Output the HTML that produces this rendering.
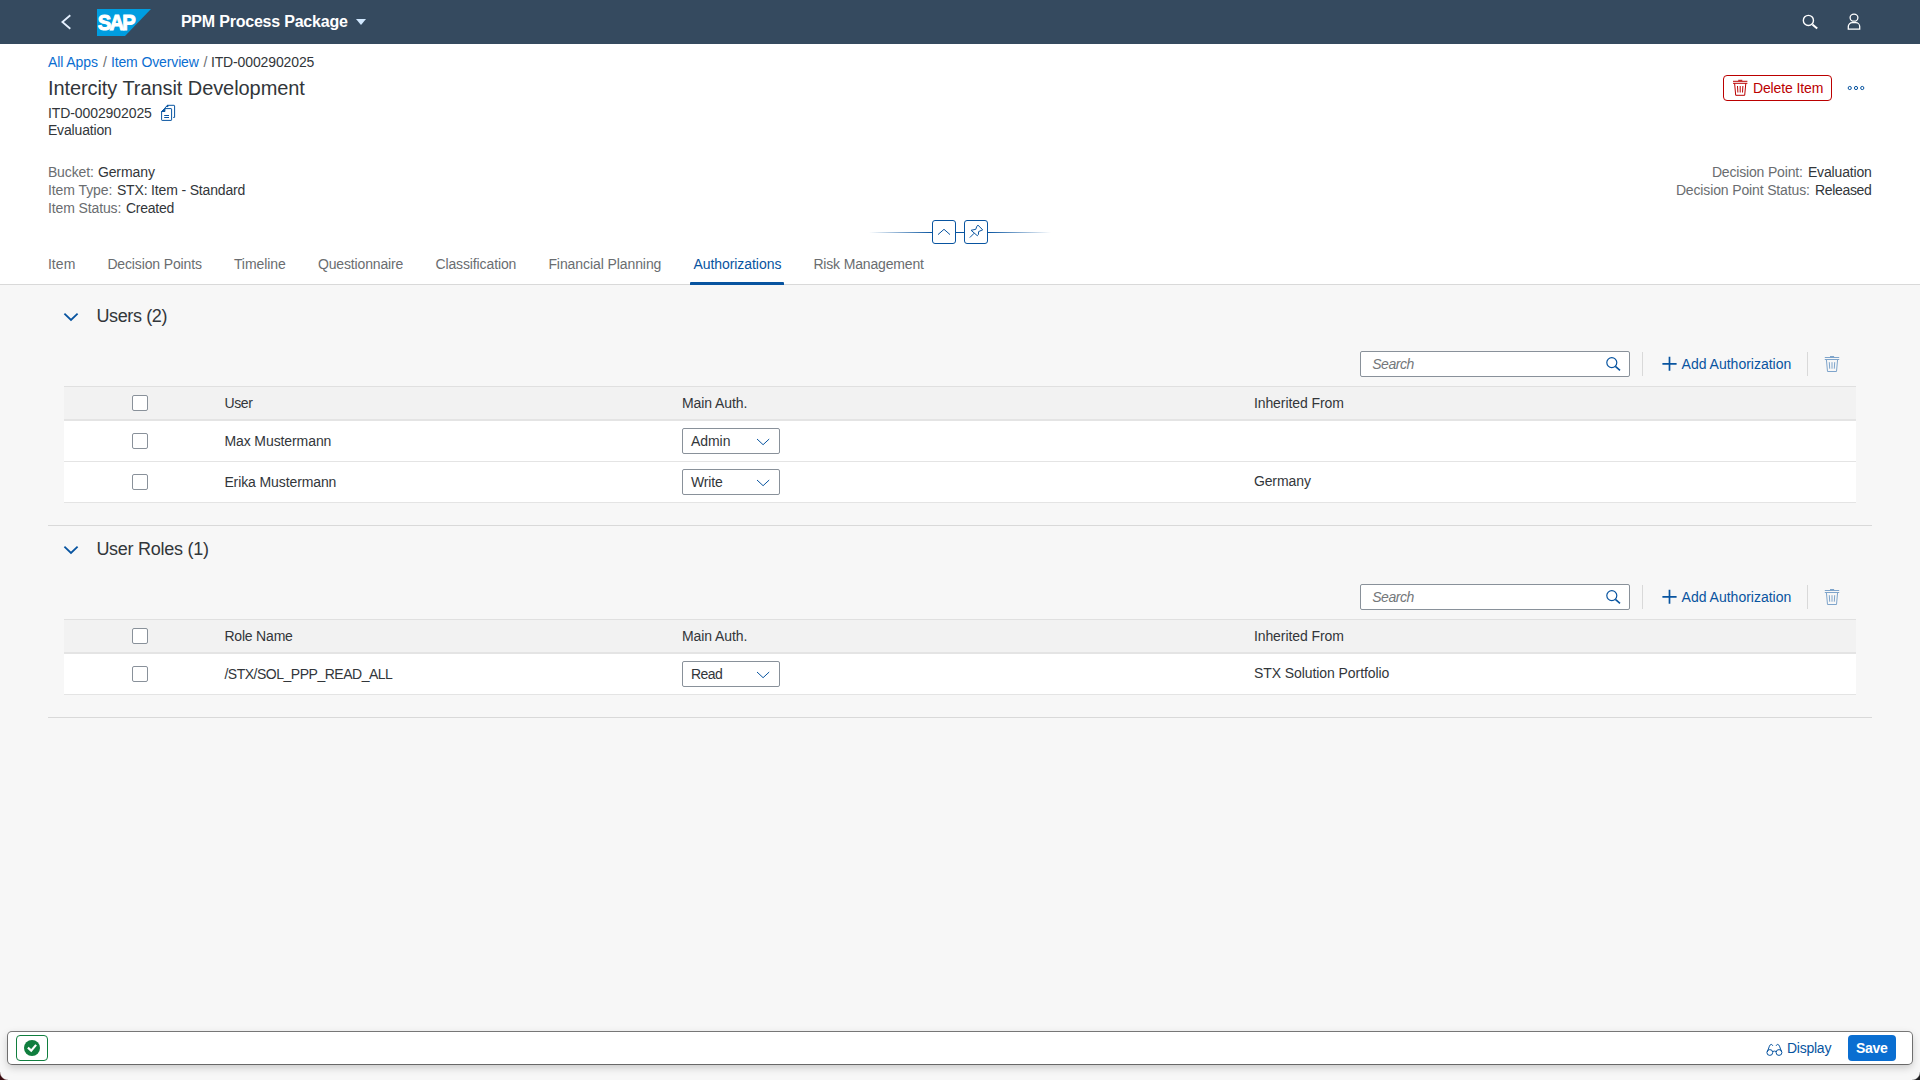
<!DOCTYPE html>
<html lang="en"><head><meta charset="utf-8"><title>Intercity Transit Development</title>
<style>
*{box-sizing:border-box;margin:0;padding:0}
html,body{width:1920px;height:1080px;overflow:hidden}
body{position:relative;background:#f7f7f7;font-family:"Liberation Sans",sans-serif;font-size:14px;color:#32363a}
.a{position:absolute}
.t{position:absolute;white-space:pre;font-family:"Liberation Sans",sans-serif}
#shell{left:0;top:0;width:1920px;height:44px;background:#354a5f}
#hdr{left:0;top:44px;width:1920px;height:241px;background:#fff;border-bottom:1px solid #d9d9d9}
.cb{position:absolute;width:16px;height:16px;border:1px solid #89919a;border-radius:2px;background:#fff}
.sel{position:absolute;width:98px;height:26px;border:1px solid #89919a;border-radius:2px;background:#fff}
.inp{position:absolute;width:270px;height:26px;border:1px solid #89919a;border-radius:2px;background:#fff}
.vsep{position:absolute;width:1px;height:24px;background:#d9d9d9}
.thead{position:absolute;left:64px;width:1792px;height:35px;background:#f2f2f2;border-top:1px solid #e0e0e0;border-bottom:2px solid #e4e4e4}
.trow{position:absolute;left:64px;width:1792px;height:41px;background:#fff;border-bottom:1px solid #e4e4e4}
.hline{position:absolute;left:48px;width:1824px;height:1px;background:#d9d9d9}
svg{position:absolute;overflow:visible}

#footer{left:8px;top:1032px;width:1904px;height:32px;background:#fff;border-radius:4px;box-shadow:0 0 0 1px rgba(0,0,0,.5),0 3px 8px rgba(0,0,0,.22)}

</style></head>
<body>
<div class="a" id="shell"></div>
<div class="a" id="hdr"></div>
<!-- section lines -->
<div class="hline" style="top:525px"></div>
<div class="hline" style="top:717px"></div>
<!-- table 1 -->
<div class="thead" style="top:386px"></div>
<div class="trow" style="top:421px"></div>
<div class="trow" style="top:462px"></div>
<!-- table 2 -->
<div class="thead" style="top:619px"></div>
<div class="trow" style="top:654px"></div>
<!-- checkboxes -->
<div class="cb" style="left:132px;top:395px"></div>
<div class="cb" style="left:132px;top:433px"></div>
<div class="cb" style="left:132px;top:474px"></div>
<div class="cb" style="left:132px;top:628px"></div>
<div class="cb" style="left:132px;top:666px"></div>
<!-- selects -->
<div class="sel" style="left:682px;top:428px"></div>
<div class="sel" style="left:682px;top:469px"></div>
<div class="sel" style="left:682px;top:661px"></div>
<!-- search inputs -->
<div class="inp" style="left:1360px;top:351px"></div>
<div class="inp" style="left:1360px;top:584px"></div>
<div class="vsep" style="left:1642px;top:352px"></div>
<div class="vsep" style="left:1807px;top:352px"></div>
<div class="vsep" style="left:1642px;top:585px"></div>
<div class="vsep" style="left:1807px;top:585px"></div>
<!-- footer -->
<div class="a" id="footer"></div>
<div class="a" style="left:16px;top:1035px;width:32px;height:26px;border:1px solid #107e3e;border-radius:4px;background:#fff"></div>
<div class="a" style="left:1848px;top:1035px;width:48px;height:26px;border-radius:4px;background:#0a6ed1"></div>
<!-- delete button -->
<div class="a" style="left:1723px;top:75px;width:109px;height:26px;border:1px solid #bb0000;border-radius:4px;background:#fff"></div>
<!-- tab underline -->
<div class="a" style="left:690px;top:282px;width:94px;height:3px;background:#0854a0;border-radius:1px 1px 0 0"></div>
<!-- collapse / pin -->
<div class="a" style="left:869px;top:232px;width:63px;height:1px;background:linear-gradient(to right,rgba(8,84,160,0),#0854a0)"></div>
<div class="a" style="left:956px;top:232px;width:8px;height:1px;background:#0854a0"></div>
<div class="a" style="left:988px;top:232px;width:63px;height:1px;background:linear-gradient(to right,#0854a0,rgba(8,84,160,0))"></div>
<div class="a" style="left:932px;top:220px;width:24px;height:24px;border:1px solid #0854a0;border-radius:3px;background:#fff"></div>
<div class="a" style="left:964px;top:220px;width:24px;height:24px;border:1px solid #0854a0;border-radius:3px;background:#fff"></div>
<!-- window corners -->
<div class="a" style="left:0;top:1072px;width:8px;height:8px;background:radial-gradient(circle at 100% 0,rgba(58,12,16,0) 7.3px,#3a0c10 8.6px)"></div>
<div class="a" style="left:1912px;top:1072px;width:8px;height:8px;background:radial-gradient(circle at 0 0,rgba(30,30,32,0) 7.3px,#1e1e20 8.6px)"></div>

<!-- ICON LAYER -->
<svg class="a" style="left:0;top:0" width="1920" height="1080" viewBox="0 0 1920 1080" fill="none">
  <!-- back chevron -->
  <path d="M70.3 15.3 L62.4 22 L70.3 28.7" stroke="#e5f0ff" stroke-width="1.8"/>
  <!-- SAP logo -->
  <path d="M97 9 H151 L125 36 H97 Z" fill="#009de0"/>
  <text transform="translate(97.8 30.4) scale(.93 1)" style="letter-spacing:-2px" font-family="Liberation Sans, sans-serif" font-weight="700" font-size="21.8" fill="#fff" stroke="#fff" stroke-width="1">SAP</text>
  <!-- title dropdown -->
  <path d="M356 19 H366 L361 25 Z" fill="#d1e8ff"/>
  <!-- shell search -->
  <circle cx="1808.4" cy="20.4" r="5.05" stroke="#fff" stroke-width="1.4"/>
  <path d="M1812.4 24.4 L1817.2 28.6" stroke="#fff" stroke-width="2"/>
  <!-- shell user -->
  <ellipse cx="1854" cy="17.7" rx="3.9" ry="3.5" stroke="#fff" stroke-width="1.3"/>
  <path d="M1848.3 29.2 V26.6 A3.9 3.9 0 0 1 1852.2 22.7 H1855.8 A3.9 3.9 0 0 1 1859.7 26.6 V29.2 Z" stroke="#fff" stroke-width="1.3"/>
  <!-- copy icon -->
  <g stroke="#0854a0" stroke-width="1">
    <path d="M161.6 111.5 L164.9 108.6 H171.1 A.5 .5 0 0 1 171.6 109.1 V119.9 A.5 .5 0 0 1 171.1 120.4 H162.1 A.5 .5 0 0 1 161.6 119.9 Z"/>
    <path d="M161.6 111.5 L164.9 108.6 V111.5 Z" fill="#0854a0"/>
    <path d="M164.2 115.5 H169 M164.2 117.5 H169"/>
    <path d="M164.6 108.4 L167.4 105.3 H174.1 A.5 .5 0 0 1 174.6 105.8 V117.4 H173.2"/>
    <path d="M166.4 106.6 L167.6 105.3 H168 V106.6 Z" fill="#0854a0"/>
  </g>
  <!-- delete (red trash) -->
  <g id="trash" stroke="#bb0000" stroke-width="1" transform="translate(-91.8 -276.2)">
    <path d="M1824.8 357.5 H1839.2 M1830 356.5 H1834.1 M1824.8 359.5 H1839.2"/>
    <path d="M1826.4 359.5 L1827.5 371.5 H1836.5 L1837.6 359.5"/>
    <path d="M1829.3 362.2 L1829.7 368.7 M1832 362.2 V368.7 M1834.7 362.2 L1834.3 368.7"/>
  </g>
  <!-- overflow -->
  <g stroke="#0854a0" stroke-width="1">
    <circle cx="1849.75" cy="88" r="1.6"/><circle cx="1856" cy="88" r="1.6"/><circle cx="1862.25" cy="88" r="1.6"/>
  </g>
  <!-- collapse chevron -->
  <path d="M938 234.6 L944 229.3 L950 234.6" stroke="#0854a0" stroke-width="1"/>
  <!-- pin -->
  <path d="M978 225.2 L982.7 229.8 L978.6 231.6 L978.4 234.6 L977.3 235.7 L971.1 230.3 L975.8 229.3 L976.8 226.3 Z M974.2 233.2 L969.8 237.6" stroke="#0854a0" stroke-width="1"/>
  <!-- section chevrons -->
  <path d="M64.4 313.6 L71 320 L77.6 313.6" stroke="#0854a0" stroke-width="1.8"/>
  <path d="M64.4 546.6 L71 553 L77.6 546.6" stroke="#0854a0" stroke-width="1.8"/>
  <!-- toolbar 1 -->
  <g id="tb">
    <circle cx="1611.8" cy="362.6" r="5" stroke="#0854a0" stroke-width="1.2"/>
    <path d="M1615.4 366.3 L1620 370.3" stroke="#0854a0" stroke-width="1.6"/>
    <path d="M1662.4 363.8 H1676.6 M1669.5 356.8 V370.8" stroke="#0854a0" stroke-width="1.7"/>
    <g stroke="#0854a0" stroke-width="1" opacity=".5">
      <path d="M1824.8 357.5 H1839.2 M1830 356.5 H1834.1 M1824.8 359.5 H1839.2"/>
      <path d="M1826.4 359.5 L1827.5 371.5 H1836.5 L1837.6 359.5"/>
      <path d="M1829.3 362.2 L1829.7 368.7 M1832 362.2 V368.7 M1834.7 362.2 L1834.3 368.7"/>
    </g>
  </g>
  <!-- toolbar 2 -->
  <g transform="translate(0 233)">
    <circle cx="1611.8" cy="362.6" r="5" stroke="#0854a0" stroke-width="1.2"/>
    <path d="M1615.4 366.3 L1620 370.3" stroke="#0854a0" stroke-width="1.6"/>
    <path d="M1662.4 363.8 H1676.6 M1669.5 356.8 V370.8" stroke="#0854a0" stroke-width="1.7"/>
    <g stroke="#0854a0" stroke-width="1" opacity=".5">
      <path d="M1824.8 357.5 H1839.2 M1830 356.5 H1834.1 M1824.8 359.5 H1839.2"/>
      <path d="M1826.4 359.5 L1827.5 371.5 H1836.5 L1837.6 359.5"/>
      <path d="M1829.3 362.2 L1829.7 368.7 M1832 362.2 V368.7 M1834.7 362.2 L1834.3 368.7"/>
    </g>
  </g>
  <!-- select arrows -->
  <path d="M757 439 L763.1 444.7 L769.2 439" stroke="#0854a0" stroke-width="1"/>
  <path d="M757 480 L763.1 485.7 L769.2 480" stroke="#0854a0" stroke-width="1"/>
  <path d="M757 672 L763.1 677.7 L769.2 672" stroke="#0854a0" stroke-width="1"/>
  <!-- footer: green check -->
  <circle cx="32" cy="1048" r="8" fill="#107e3e"/>
  <path d="M27.9 1047.6 L31.2 1050.6 L36.1 1044.9" stroke="#fff" stroke-width="2.2"/>
  <!-- footer: glasses -->
  <g stroke="#0854a0" stroke-width="1">
    <circle cx="1769.8" cy="1052.5" r="2.9"/><circle cx="1779" cy="1052.5" r="2.9"/>
    <path d="M1772.4 1051.6 Q1774.45 1050.6 1776.5 1051.6"/>
    <path d="M1767.3 1052 L1769.4 1046.2 Q1770.2 1044.3 1771.3 1044.4 Q1772.2 1044.5 1772.8 1045.8"/>
    <path d="M1781.6 1052 L1779.5 1046.2 Q1778.7 1044.3 1777.6 1044.4 Q1776.7 1044.5 1776.1 1045.8"/>
  </g>
</svg>

<!-- text layer -->
<div class="t" style="left:180.9px;top:12.7px;font-size:16px;line-height:18px;color:#ffffff;font-weight:700;font-style:normal;letter-spacing:-0.209px">PPM Process Package</div>
<div class="t" style="left:47.9px;top:54.0px;font-size:14px;line-height:16px;color:#0a6ed1;font-weight:400;font-style:normal;letter-spacing:-0.085px">All Apps</div>
<div class="t" style="left:102.9px;top:54.0px;font-size:14px;line-height:16px;color:#6a6d70;font-weight:400;font-style:normal;letter-spacing:-0.391px">/</div>
<div class="t" style="left:110.9px;top:54.0px;font-size:14px;line-height:16px;color:#0a6ed1;font-weight:400;font-style:normal;letter-spacing:-0.122px">Item Overview</div>
<div class="t" style="left:203.4px;top:54.0px;font-size:14px;line-height:16px;color:#6a6d70;font-weight:400;font-style:normal;letter-spacing:-0.391px">/</div>
<div class="t" style="left:210.9px;top:54.0px;font-size:14px;line-height:16px;color:#32363a;font-weight:400;font-style:normal;letter-spacing:-0.121px">ITD-0002902025</div>
<div class="t" style="left:47.9px;top:76.5px;font-size:20px;line-height:22px;color:#32363a;font-weight:400;font-style:normal;letter-spacing:-0.071px">Intercity Transit Development</div>
<div class="t" style="left:47.9px;top:104.5px;font-size:14px;line-height:16px;color:#32363a;font-weight:400;font-style:normal;letter-spacing:-0.083px">ITD-0002902025</div>
<div class="t" style="left:47.9px;top:122.0px;font-size:14px;line-height:16px;color:#32363a;font-weight:400;font-style:normal;letter-spacing:-0.155px">Evaluation</div>
<div class="t" style="left:47.9px;top:164.0px;font-size:14px;line-height:16px;color:#6a6d70;font-weight:400;font-style:normal;letter-spacing:-0.117px">Bucket:</div>
<div class="t" style="left:97.9px;top:164.0px;font-size:14px;line-height:16px;color:#32363a;font-weight:400;font-style:normal;letter-spacing:-0.096px">Germany</div>
<div class="t" style="left:47.9px;top:182.0px;font-size:14px;line-height:16px;color:#6a6d70;font-weight:400;font-style:normal;letter-spacing:-0.068px">Item Type:</div>
<div class="t" style="left:116.9px;top:182.0px;font-size:14px;line-height:16px;color:#32363a;font-weight:400;font-style:normal;letter-spacing:-0.158px">STX: Item - Standard</div>
<div class="t" style="left:47.9px;top:200.0px;font-size:14px;line-height:16px;color:#6a6d70;font-weight:400;font-style:normal;letter-spacing:-0.109px">Item Status:</div>
<div class="t" style="left:125.9px;top:200.0px;font-size:14px;line-height:16px;color:#32363a;font-weight:400;font-style:normal;letter-spacing:-0.219px">Created</div>
<div class="t" style="left:1711.9px;top:164.0px;font-size:14px;line-height:16px;color:#6a6d70;font-weight:400;font-style:normal;letter-spacing:-0.171px">Decision Point:</div>
<div class="t" style="left:1807.9px;top:164.0px;font-size:14px;line-height:16px;color:#32363a;font-weight:400;font-style:normal;letter-spacing:-0.155px">Evaluation</div>
<div class="t" style="left:1675.9px;top:182.0px;font-size:14px;line-height:16px;color:#6a6d70;font-weight:400;font-style:normal;letter-spacing:-0.141px">Decision Point Status:</div>
<div class="t" style="left:1814.9px;top:182.0px;font-size:14px;line-height:16px;color:#32363a;font-weight:400;font-style:normal;letter-spacing:-0.308px">Released</div>
<div class="t" style="left:1752.9px;top:79.5px;font-size:14px;line-height:16px;color:#bb0000;font-weight:400;font-style:normal;letter-spacing:-0.109px">Delete Item</div>
<div class="t" style="left:47.9px;top:255.5px;font-size:14px;line-height:16px;color:#6a6d70;font-weight:400;font-style:normal;letter-spacing:0.089px">Item</div>
<div class="t" style="left:107.4px;top:255.5px;font-size:14px;line-height:16px;color:#6a6d70;font-weight:400;font-style:normal;letter-spacing:-0.143px">Decision Points</div>
<div class="t" style="left:233.9px;top:255.5px;font-size:14px;line-height:16px;color:#6a6d70;font-weight:400;font-style:normal;letter-spacing:-0.056px">Timeline</div>
<div class="t" style="left:317.9px;top:255.5px;font-size:14px;line-height:16px;color:#6a6d70;font-weight:400;font-style:normal;letter-spacing:-0.139px">Questionnaire</div>
<div class="t" style="left:435.4px;top:255.5px;font-size:14px;line-height:16px;color:#6a6d70;font-weight:400;font-style:normal;letter-spacing:-0.114px">Classification</div>
<div class="t" style="left:548.4px;top:255.5px;font-size:14px;line-height:16px;color:#6a6d70;font-weight:400;font-style:normal;letter-spacing:-0.083px">Financial Planning</div>
<div class="t" style="left:693.4px;top:255.5px;font-size:14px;line-height:16px;color:#0854a0;font-weight:400;font-style:normal;letter-spacing:-0.055px">Authorizations</div>
<div class="t" style="left:813.4px;top:255.5px;font-size:14px;line-height:16px;color:#6a6d70;font-weight:400;font-style:normal;letter-spacing:-0.166px">Risk Management</div>
<div class="t" style="left:96.4px;top:305.5px;font-size:18px;line-height:20px;color:#32363a;font-weight:400;font-style:normal;letter-spacing:-0.377px">Users (2)</div>
<div class="t" style="left:1372.2px;top:355.5px;font-size:14px;line-height:16px;color:#74777a;font-weight:400;font-style:italic;letter-spacing:-0.432px">Search</div>
<div class="t" style="left:1681.6px;top:355.5px;font-size:14px;line-height:16px;color:#0854a0;font-weight:400;font-style:normal;letter-spacing:-0.003px">Add Authorization</div>
<div class="t" style="left:224.4px;top:395.0px;font-size:14px;line-height:16px;color:#32363a;font-weight:400;font-style:normal;letter-spacing:-0.354px">User</div>
<div class="t" style="left:681.9px;top:395.0px;font-size:14px;line-height:16px;color:#32363a;font-weight:400;font-style:normal;letter-spacing:-0.073px">Main Auth.</div>
<div class="t" style="left:1253.9px;top:395.0px;font-size:14px;line-height:16px;color:#32363a;font-weight:400;font-style:normal;letter-spacing:-0.081px">Inherited From</div>
<div class="t" style="left:224.4px;top:432.5px;font-size:14px;line-height:16px;color:#32363a;font-weight:400;font-style:normal;letter-spacing:-0.089px">Max Mustermann</div>
<div class="t" style="left:690.9px;top:432.5px;font-size:14px;line-height:16px;color:#32363a;font-weight:400;font-style:normal;letter-spacing:-0.022px">Admin</div>
<div class="t" style="left:224.4px;top:473.5px;font-size:14px;line-height:16px;color:#32363a;font-weight:400;font-style:normal;letter-spacing:-0.106px">Erika Mustermann</div>
<div class="t" style="left:690.9px;top:473.5px;font-size:14px;line-height:16px;color:#32363a;font-weight:400;font-style:normal;letter-spacing:-0.105px">Write</div>
<div class="t" style="left:1253.9px;top:473.0px;font-size:14px;line-height:16px;color:#32363a;font-weight:400;font-style:normal;letter-spacing:-0.096px">Germany</div>
<div class="t" style="left:96.4px;top:538.5px;font-size:18px;line-height:20px;color:#32363a;font-weight:400;font-style:normal;letter-spacing:-0.272px">User Roles (1)</div>
<div class="t" style="left:1372.2px;top:588.5px;font-size:14px;line-height:16px;color:#74777a;font-weight:400;font-style:italic;letter-spacing:-0.432px">Search</div>
<div class="t" style="left:1681.6px;top:588.5px;font-size:14px;line-height:16px;color:#0854a0;font-weight:400;font-style:normal;letter-spacing:-0.003px">Add Authorization</div>
<div class="t" style="left:224.4px;top:628.0px;font-size:14px;line-height:16px;color:#32363a;font-weight:400;font-style:normal;letter-spacing:-0.191px">Role Name</div>
<div class="t" style="left:681.9px;top:628.0px;font-size:14px;line-height:16px;color:#32363a;font-weight:400;font-style:normal;letter-spacing:-0.073px">Main Auth.</div>
<div class="t" style="left:1253.9px;top:628.0px;font-size:14px;line-height:16px;color:#32363a;font-weight:400;font-style:normal;letter-spacing:-0.081px">Inherited From</div>
<div class="t" style="left:224.4px;top:665.5px;font-size:14px;line-height:16px;color:#32363a;font-weight:400;font-style:normal;letter-spacing:-0.485px">/STX/SOL_PPP_READ_ALL</div>
<div class="t" style="left:690.9px;top:665.5px;font-size:14px;line-height:16px;color:#32363a;font-weight:400;font-style:normal;letter-spacing:-0.49px">Read</div>
<div class="t" style="left:1253.9px;top:665.0px;font-size:14px;line-height:16px;color:#32363a;font-weight:400;font-style:normal;letter-spacing:-0.07px">STX Solution Portfolio</div>
<div class="t" style="left:1786.9px;top:1039.5px;font-size:14px;line-height:16px;color:#0854a0;font-weight:400;font-style:normal;letter-spacing:-0.234px">Display</div>
<div class="t" style="left:1855.9px;top:1039.5px;font-size:14px;line-height:16px;color:#ffffff;font-weight:700;font-style:normal;letter-spacing:-0.234px">Save</div>
</body></html>
